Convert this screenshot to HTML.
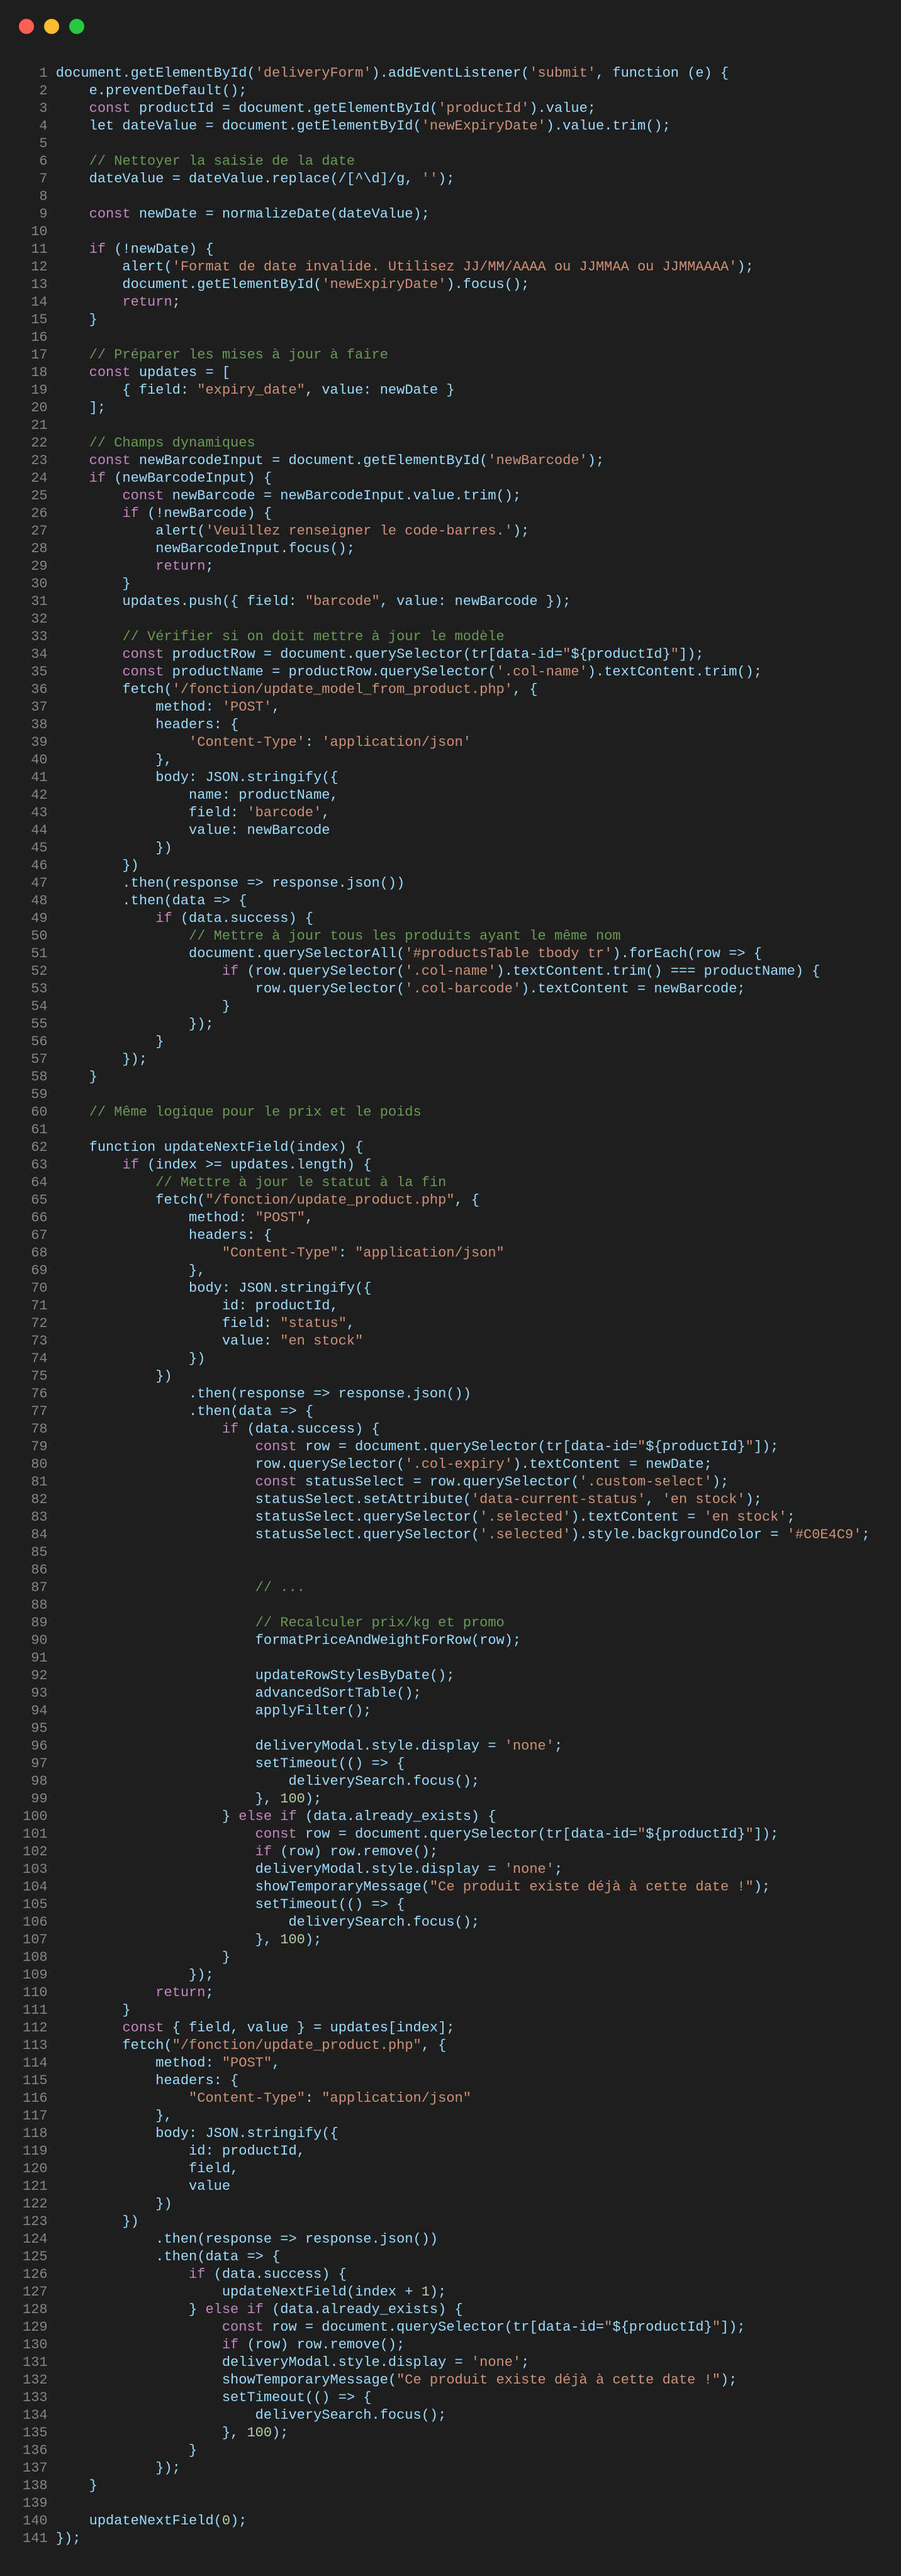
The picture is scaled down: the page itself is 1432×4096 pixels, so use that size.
<!DOCTYPE html>
<html><head><meta charset="utf-8"><style>
html,body{margin:0;padding:0;background:#1e1e1e;}
body{width:1432px;height:4096px;position:relative;overflow:hidden;}
.d{position:absolute;top:30px;width:24px;height:24px;border-radius:50%;}
pre{position:absolute;left:36px;top:103px;margin:0;font-family:"Liberation Mono",monospace;font-size:22px;line-height:28px;color:#9cdcfe;white-space:pre;}
.n{color:#858585}.s{color:#ce9178}.k{color:#c586c0}.c{color:#6a9955}.m{color:#b5cea8}.p{color:#d4d4d4}
</style></head><body>
<div class="d" style="left:30px;background:#ff5f56"></div>
<div class="d" style="left:70px;background:#ffbd2e"></div>
<div class="d" style="left:110px;background:#27c93f"></div>
<pre><span class="n">  1</span> document.getElementById(<span class="s">'deliveryForm'</span>).addEventListener(<span class="s">'submit'</span>, function (e) {
<span class="n">  2</span>     e.preventDefault();
<span class="n">  3</span>     <span class="k">const</span> productId = document.getElementById(<span class="s">'productId'</span>).value;
<span class="n">  4</span>     let dateValue = document.getElementById(<span class="s">'newExpiryDate'</span>).value.trim();
<span class="n">  5</span>
<span class="n">  6</span>     <span class="c">// Nettoyer la saisie de la date</span>
<span class="n">  7</span>     dateValue = dateValue.replace(/[^\d]/g, <span class="s">''</span>);
<span class="n">  8</span>
<span class="n">  9</span>     <span class="k">const</span> newDate = normalizeDate(dateValue);
<span class="n"> 10</span>
<span class="n"> 11</span>     <span class="k">if</span> (!newDate) {
<span class="n"> 12</span>         alert(<span class="s">'Format de date invalide. Utilisez JJ/MM/AAAA ou JJMMAA ou JJMMAAAA'</span>);
<span class="n"> 13</span>         document.getElementById(<span class="s">'newExpiryDate'</span>).focus();
<span class="n"> 14</span>         <span class="k">return</span>;
<span class="n"> 15</span>     }
<span class="n"> 16</span>
<span class="n"> 17</span>     <span class="c">// Préparer les mises à jour à faire</span>
<span class="n"> 18</span>     <span class="k">const</span> updates = [
<span class="n"> 19</span>         { field: <span class="s">"expiry_date"</span>, value: newDate }
<span class="n"> 20</span>     ];
<span class="n"> 21</span>
<span class="n"> 22</span>     <span class="c">// Champs dynamiques</span>
<span class="n"> 23</span>     <span class="k">const</span> newBarcodeInput = document.getElementById(<span class="s">'newBarcode'</span>);
<span class="n"> 24</span>     <span class="k">if</span> (newBarcodeInput) {
<span class="n"> 25</span>         <span class="k">const</span> newBarcode = newBarcodeInput.value.trim();
<span class="n"> 26</span>         <span class="k">if</span> (!newBarcode) {
<span class="n"> 27</span>             alert(<span class="s">'Veuillez renseigner le code-barres.'</span>);
<span class="n"> 28</span>             newBarcodeInput.focus();
<span class="n"> 29</span>             <span class="k">return</span>;
<span class="n"> 30</span>         }
<span class="n"> 31</span>         updates.push({ field: <span class="s">"barcode"</span>, value: newBarcode });
<span class="n"> 32</span>
<span class="n"> 33</span>         <span class="c">// Vérifier si on doit mettre à jour le modèle</span>
<span class="n"> 34</span>         <span class="k">const</span> productRow = document.querySelector(tr[data-id=<span class="s">"</span>${productId}<span class="s">"</span>]);
<span class="n"> 35</span>         <span class="k">const</span> productName = productRow.querySelector(<span class="s">'.col-name'</span>).textContent.trim();
<span class="n"> 36</span>         fetch(<span class="s">'/fonction/update_model_from_product.php'</span>, {
<span class="n"> 37</span>             method: <span class="s">'POST'</span>,
<span class="n"> 38</span>             headers: {
<span class="n"> 39</span>                 <span class="s">'Content-Type'</span>: <span class="s">'application/json'</span>
<span class="n"> 40</span>             },
<span class="n"> 41</span>             body: JSON.stringify({
<span class="n"> 42</span>                 name: productName,
<span class="n"> 43</span>                 field: <span class="s">'barcode'</span>,
<span class="n"> 44</span>                 value: newBarcode
<span class="n"> 45</span>             })
<span class="n"> 46</span>         })
<span class="n"> 47</span>         .then(response =&gt; response.json())
<span class="n"> 48</span>         .then(data =&gt; {
<span class="n"> 49</span>             <span class="k">if</span> (data.success) {
<span class="n"> 50</span>                 <span class="c">// Mettre à jour tous les produits ayant le même nom</span>
<span class="n"> 51</span>                 document.querySelectorAll(<span class="s">'#productsTable tbody tr'</span>).forEach(row =&gt; {
<span class="n"> 52</span>                     <span class="k">if</span> (row.querySelector(<span class="s">'.col-name'</span>).textContent.trim() === productName) {
<span class="n"> 53</span>                         row.querySelector(<span class="s">'.col-barcode'</span>).textContent = newBarcode;
<span class="n"> 54</span>                     }
<span class="n"> 55</span>                 });
<span class="n"> 56</span>             }
<span class="n"> 57</span>         });
<span class="n"> 58</span>     }
<span class="n"> 59</span>
<span class="n"> 60</span>     <span class="c">// Même logique pour le prix et le poids</span>
<span class="n"> 61</span>
<span class="n"> 62</span>     function updateNextField(index) {
<span class="n"> 63</span>         <span class="k">if</span> (index &gt;= updates.length) {
<span class="n"> 64</span>             <span class="c">// Mettre à jour le statut à la fin</span>
<span class="n"> 65</span>             fetch(<span class="s">"/fonction/update_product.php"</span>, {
<span class="n"> 66</span>                 method: <span class="s">"POST"</span>,
<span class="n"> 67</span>                 headers: {
<span class="n"> 68</span>                     <span class="s">"Content-Type"</span>: <span class="s">"application/json"</span>
<span class="n"> 69</span>                 },
<span class="n"> 70</span>                 body: JSON.stringify({
<span class="n"> 71</span>                     id: productId,
<span class="n"> 72</span>                     field: <span class="s">"status"</span>,
<span class="n"> 73</span>                     value: <span class="s">"en stock"</span>
<span class="n"> 74</span>                 })
<span class="n"> 75</span>             })
<span class="n"> 76</span>                 .then(response =&gt; response.json())
<span class="n"> 77</span>                 .then(data =&gt; {
<span class="n"> 78</span>                     <span class="k">if</span> (data.success) {
<span class="n"> 79</span>                         <span class="k">const</span> row = document.querySelector(tr[data-id=<span class="s">"</span>${productId}<span class="s">"</span>]);
<span class="n"> 80</span>                         row.querySelector(<span class="s">'.col-expiry'</span>).textContent = newDate;
<span class="n"> 81</span>                         <span class="k">const</span> statusSelect = row.querySelector(<span class="s">'.custom-select'</span>);
<span class="n"> 82</span>                         statusSelect.setAttribute(<span class="s">'data-current-status'</span>, <span class="s">'en stock'</span>);
<span class="n"> 83</span>                         statusSelect.querySelector(<span class="s">'.selected'</span>).textContent = <span class="s">'en stock'</span>;
<span class="n"> 84</span>                         statusSelect.querySelector(<span class="s">'.selected'</span>).style.backgroundColor = <span class="s">'#C0E4C9'</span>;
<span class="n"> 85</span>
<span class="n"> 86</span>
<span class="n"> 87</span>                         <span class="c">// ...</span>
<span class="n"> 88</span>
<span class="n"> 89</span>                         <span class="c">// Recalculer prix/kg et promo</span>
<span class="n"> 90</span>                         formatPriceAndWeightForRow(row);
<span class="n"> 91</span>
<span class="n"> 92</span>                         updateRowStylesByDate();
<span class="n"> 93</span>                         advancedSortTable();
<span class="n"> 94</span>                         applyFilter();
<span class="n"> 95</span>
<span class="n"> 96</span>                         deliveryModal.style.display = <span class="s">'none'</span>;
<span class="n"> 97</span>                         setTimeout(() =&gt; {
<span class="n"> 98</span>                             deliverySearch.focus();
<span class="n"> 99</span>                         }, <span class="m">100</span>);
<span class="n">100</span>                     } <span class="k">else if</span> (data.already_exists) {
<span class="n">101</span>                         <span class="k">const</span> row = document.querySelector(tr[data-id=<span class="s">"</span>${productId}<span class="s">"</span>]);
<span class="n">102</span>                         <span class="k">if</span> (row) row.remove();
<span class="n">103</span>                         deliveryModal.style.display = <span class="s">'none'</span>;
<span class="n">104</span>                         showTemporaryMessage(<span class="s">"Ce produit existe déjà à cette date !"</span>);
<span class="n">105</span>                         setTimeout(() =&gt; {
<span class="n">106</span>                             deliverySearch.focus();
<span class="n">107</span>                         }, <span class="m">100</span>);
<span class="n">108</span>                     }
<span class="n">109</span>                 });
<span class="n">110</span>             <span class="k">return</span>;
<span class="n">111</span>         }
<span class="n">112</span>         <span class="k">const</span> { field, value } = updates[index];
<span class="n">113</span>         fetch(<span class="s">"/fonction/update_product.php"</span>, {
<span class="n">114</span>             method: <span class="s">"POST"</span>,
<span class="n">115</span>             headers: {
<span class="n">116</span>                 <span class="s">"Content-Type"</span>: <span class="s">"application/json"</span>
<span class="n">117</span>             },
<span class="n">118</span>             body: JSON.stringify({
<span class="n">119</span>                 id: productId,
<span class="n">120</span>                 field,
<span class="n">121</span>                 value
<span class="n">122</span>             })
<span class="n">123</span>         })
<span class="n">124</span>             .then(response =&gt; response.json())
<span class="n">125</span>             .then(data =&gt; {
<span class="n">126</span>                 <span class="k">if</span> (data.success) {
<span class="n">127</span>                     updateNextField(index + <span class="m">1</span>);
<span class="n">128</span>                 } <span class="k">else if</span> (data.already_exists) {
<span class="n">129</span>                     <span class="k">const</span> row = document.querySelector(tr[data-id=<span class="s">"</span>${productId}<span class="s">"</span>]);
<span class="n">130</span>                     <span class="k">if</span> (row) row.remove();
<span class="n">131</span>                     deliveryModal.style.display = <span class="s">'none'</span>;
<span class="n">132</span>                     showTemporaryMessage(<span class="s">"Ce produit existe déjà à cette date !"</span>);
<span class="n">133</span>                     setTimeout(() =&gt; {
<span class="n">134</span>                         deliverySearch.focus();
<span class="n">135</span>                     }, <span class="m">100</span>);
<span class="n">136</span>                 }
<span class="n">137</span>             });
<span class="n">138</span>     }
<span class="n">139</span>
<span class="n">140</span>     updateNextField(<span class="m">0</span>);
<span class="n">141</span> });</pre>
</body></html>
